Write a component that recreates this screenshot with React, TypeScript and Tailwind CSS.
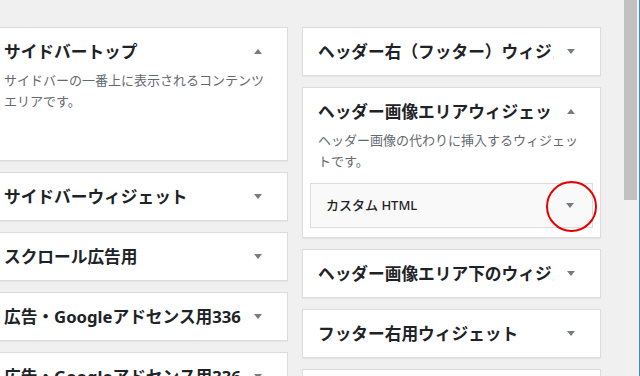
import React from 'react';

const font = "font-['Noto_Sans','Noto_Sans_CJK_JP',sans-serif]";

function Arrow({ up }: { up?: boolean }) {
  return (
    <svg width="8" height="5" viewBox="0 0 8 5" className="block">
      <polygon points={up ? '0,5 8,5 4,0' : '0,0 8,0 4,5'} fill="#787c82" />
    </svg>
  );
}

function WidgetHead({ title, open }: { title: string; open?: boolean }) {
  return (
    <div className="flex h-[47px] items-center">
      <h3 className="min-w-0 flex-1 overflow-hidden whitespace-nowrap pl-[15px] text-[16.7px] font-bold leading-[47px] text-[#1d2327]">
        {title}
      </h3>
      <div className="flex w-[46px] shrink-0 items-center pl-[13px]">
        <Arrow up={open} />
      </div>
    </div>
  );
}

function Card({ children }: { children: React.ReactNode }) {
  return (
    <div className="border border-[#dcdcde] bg-white shadow-[0_1px_1px_rgba(0,0,0,0.04)]">{children}</div>
  );
}

export default function App() {
  const leftRest = ['サイドバーウィジェット', 'スクロール広告用', '広告・Googleアドセンス用336', '広告・Googleアドセンス用336'];
  const rightRest = ['ヘッダー画像エリア下のウィジェット', 'フッター右用ウィジェット', 'フッター左用ウィジェット'];

  return (
    <div className={`flex h-[376px] w-[640px] overflow-hidden bg-[#f0f0f1] ${font}`}>
      <div className="flex min-w-0 flex-1 items-start gap-[14px] pt-[27px]">
        {/* left sidebar column */}
        <div className="ml-[-12px] flex w-[300px] shrink-0 flex-col gap-[11px]">
          <Card>
            <WidgetHead title="サイドバートップ" open />
            <p className="-mt-[5px] px-[15px] pb-[48px] text-[13px] leading-[21px] text-[#646970]">
              サイドバーの一番上に表示されるコンテンツエリアです。
            </p>
          </Card>
          {leftRest.map((t, i) => (
            <Card key={i}>
              <WidgetHead title={t} />
            </Card>
          ))}
        </div>

        {/* right column */}
        <div className="flex w-[299px] shrink-0 flex-col gap-[11px]">
          <Card>
            <WidgetHead title="ヘッダー右（フッター）ウィジェット" />
          </Card>
          <Card>
            <WidgetHead title="ヘッダー画像エリアウィジェット" open />
            <p className="-mt-[5px] px-[15px] text-[13px] leading-[21px] text-[#646970]">
              ヘッダー画像の代わりに挿入するウィジェットです。
            </p>
            <div className="relative mx-[7px] mb-[9px] mt-[11px] flex h-[45px] items-center border border-[#dcdcde] bg-[#f9f9f9]">
              <span className="flex-1 pl-[15px] text-[13px] font-medium text-[#1d2327]">カスタム HTML</span>
              <div className="flex w-[46px] shrink-0 items-center pl-[20px]">
                <Arrow />
              </div>
              <div className="absolute left-[235px] top-[-3px] h-[51px] w-[51px] rounded-full border-2 border-[#e60000]" />
            </div>
          </Card>
          {rightRest.map((t, i) => (
            <Card key={i}>
              <WidgetHead title={t} />
            </Card>
          ))}
        </div>
      </div>

      {/* scrollbar */}
      <div className="flex w-[17px] shrink-0">
        <div className="w-[16px] bg-[#f1f1f1] pl-[1px]">
          <div className="h-[200px] w-[13px] bg-[#c1c1c1]" />
        </div>
        <div className="w-[1px] bg-[#3c8dc8]" />
      </div>
    </div>
  );
}
